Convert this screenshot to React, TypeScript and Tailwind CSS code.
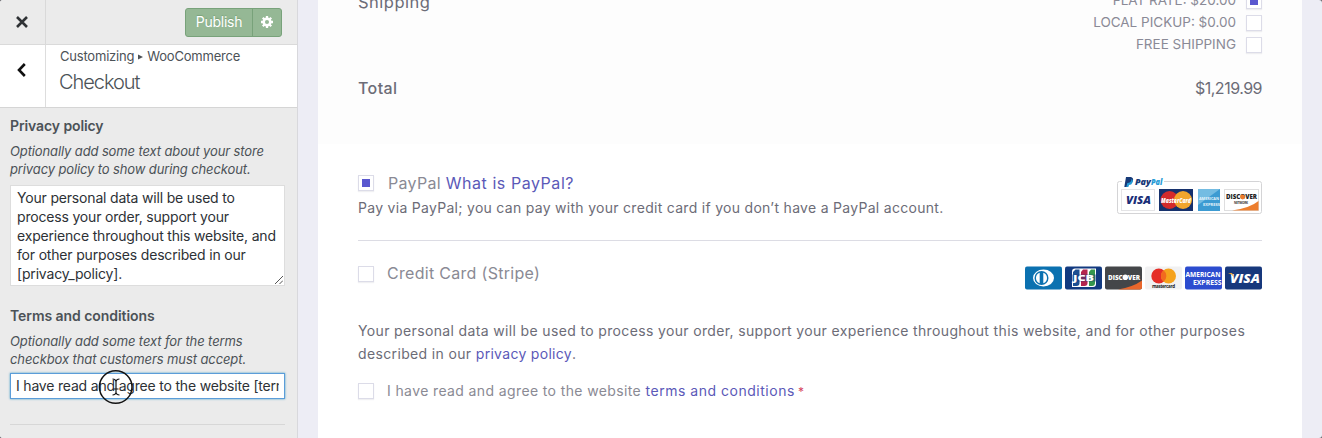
import React from "react";

function Box({ checked = false }: { checked?: boolean }) {
  return (
    <span className="flex size-4 shrink-0 items-center justify-center border border-[#dcdce8] bg-white shadow-[0_1px_1px_rgba(60,60,90,0.08)]">
      {checked && <span className="size-2 bg-[#5a58cf]" />}
    </span>
  );
}

function CardTile({ bg, children }: { bg: string; children: React.ReactNode }) {
  return (
    <svg width="37" height="24" viewBox="0 0 37 24">
      <rect y="0.5" width="37" height="23" rx="2" fill={bg} />
      {children}
    </svg>
  );
}

function StripeCards() {
  return (
    <div className="flex gap-[3px] font-['Open_Sans',sans-serif]">
      <CardTile bg="#0b71b0">
        <ellipse cx="18.5" cy="12" rx="10.5" ry="8.5" fill="#fff" />
        <circle cx="16.5" cy="12" r="7" fill="#0b71b0" />
        <path d="M14.7 6.8a5.5 5.5 0 0 0 0 10.4zM18.3 6.8a5.5 5.5 0 0 1 0 10.4z" fill="#fff" />
      </CardTile>
      <CardTile bg="#123a80">
        <path d="M10 2.5h21V18a3 3 0 0 1-3 3H7V5.5a3 3 0 0 1 3-3z" fill="#fff" />
        <path d="M10.5 3.5h4V17a3 3 0 0 1-3 3H8V6z" fill="#1c4f93" />
        <path d="M18 3.5h4.5V17a3 3 0 0 1-3 3H16V6z" fill="#b4254e" />
        <path d="M26 3.5h4V17a3 3 0 0 1-3 3h-3V6z" fill="#35974c" />
        <rect x="7" y="8.5" width="24" height="7" fill="#123a80" opacity="0.45" />
        <text x="8" y="15.2" fontSize="9" fontWeight="800" fill="#fff" textLength="21" lengthAdjust="spacingAndGlyphs">JCB</text>
      </CardTile>
      <CardTile bg="#444649">
        <path d="M13 23.5Q28 21 37 14.5v7a2 2 0 0 1-2 2z" fill="#e9662b" />
        <text x="3" y="13.5" fontSize="6.5" fontWeight="800" fill="#fff" textLength="32" lengthAdjust="spacingAndGlyphs">DISCOVER</text>
        <circle cx="20.3" cy="11.2" r="2.6" fill="#fff" />
      </CardTile>
      <CardTile bg="#f1f1f2">
        <circle cx="13.8" cy="10" r="7.5" fill="#e52d27" />
        <circle cx="23.5" cy="10" r="7.5" fill="#f5a21c" />
        <path d="M18.6 4.2a7.5 7.5 0 0 1 0 11.6a7.5 7.5 0 0 1 0-11.6z" fill="#f26a1f" />
        <text x="7" y="21.7" fontSize="4.5" fontWeight="700" fill="#222" textLength="23">mastercard</text>
      </CardTile>
      <CardTile bg="#2c4ccf">
        <text x="0.5" y="10.5" fontSize="7.5" fontWeight="700" fill="#fff" textLength="35" lengthAdjust="spacingAndGlyphs">AMERICAN</text>
        <text x="8" y="18.5" fontSize="7.5" fontWeight="700" fill="#fff" textLength="28.5" lengthAdjust="spacingAndGlyphs">EXPRESS</text>
      </CardTile>
      <CardTile bg="#17387c">
        <text x="5" y="17" fontSize="13" fontWeight="800" fontStyle="italic" fill="#fff" textLength="30" lengthAdjust="spacingAndGlyphs">VISA</text>
        <path d="M3 7h4l2 4q-2-3-6-4z" fill="#e9a33a" />
      </CardTile>
    </div>
  );
}

function PayPalCards() {
  return (
    <svg width="146" height="38" viewBox="0 0 146 38" className="font-['Open_Sans',sans-serif]">
      <rect x="1.5" y="5.5" width="144" height="32" rx="2" fill="#fff" stroke="#d4d4d6" />
      <rect x="6" y="0" width="42" height="12" fill="#fff" />
      <path d="M10 1h5q3 1 1.8 4T12.5 8l-.6 3H8.3z" fill="#173a78" />
      <path d="M15.5 3q2 1 1 3.5T13 9l-.7 2h-2l1-4q4 0 4.2-4z" fill="#239bd7" />
      <text x="19" y="9" fontSize="9" fontWeight="800" fontStyle="italic" fill="#193a78" textLength="16" lengthAdjust="spacingAndGlyphs">Pay</text>
      <text x="35" y="9" fontSize="9" fontWeight="800" fontStyle="italic" fill="#269bd6" textLength="11.5" lengthAdjust="spacingAndGlyphs">Pal</text>
      <rect x="5.5" y="13.5" width="33" height="21" fill="#fff" stroke="#e4e4e6" />
      <text x="10" y="28" fontSize="11" fontWeight="800" fontStyle="italic" fill="#1a2f78" textLength="25" lengthAdjust="spacingAndGlyphs">VISA</text>
      <rect x="43" y="13" width="34" height="22" fill="#16316d" />
      <circle cx="53.5" cy="24" r="9" fill="#d42a2b" />
      <circle cx="67" cy="24" r="9" fill="#f2a52d" />
      <text x="45" y="27" fontSize="7.5" fontWeight="800" fontStyle="italic" fill="#fff" textLength="30" lengthAdjust="spacingAndGlyphs">MasterCard</text>
      <rect x="82" y="13" width="22" height="22" fill="#3c9bd2" />
      <path d="M82 13h22L82 29z" fill="#74bce2" />
      <text x="83" y="23.5" fontSize="4" fontWeight="700" fill="#e5f4fb" textLength="20" lengthAdjust="spacingAndGlyphs">AMERICAN</text>
      <text x="87" y="29.5" fontSize="4" fontWeight="700" fill="#e5f4fb" textLength="17" lengthAdjust="spacingAndGlyphs">EXPRESS</text>
      <rect x="108.5" y="13.5" width="34" height="21" fill="#fff" stroke="#dededf" />
      <path d="M116 34.5Q134 32 142.5 25v9.5z" fill="#ed7e2e" />
      <text x="110" y="23" fontSize="6" fontWeight="800" fill="#222" textLength="31" lengthAdjust="spacingAndGlyphs">DISCOVER</text>
      <circle cx="126.7" cy="21" r="2.4" fill="#ee7b2b" />
      <text x="118" y="27.5" fontSize="3" fontWeight="700" fill="#333" textLength="14">NETWORK</text>
    </svg>
  );
}

function Sidebar() {
  return (
    <aside className="relative h-[438px] w-[298px] shrink-0 border-r border-[#d8d8dc] bg-[#ebebeb] text-[14px] text-[#4c5257]">
      <div className="flex h-[45px] border-b border-[#dadada]">
        <div className="flex w-[46px] items-center justify-center border-r border-[#d9d9d9] pr-0.5">
          <svg width="12" height="12" viewBox="0 0 12 12" stroke="#2f3235" strokeWidth="2.6">
            <path d="M1 1l10 10M11 1L1 11" />
          </svg>
        </div>
        <div className="flex flex-1 justify-end pt-2 pr-[15px]">
          <div className="flex h-[29px] w-[97px] rounded-[3px] border border-[#78a27a] bg-[#95b895] text-white">
            <div className="flex w-[67px] items-center justify-center border-r border-[#78a27a] pb-[2px] text-[14px] tracking-[-0.25px] [text-shadow:0_-1px_1px_#78a27a]">Publish</div>
            <div className="flex flex-1 items-center justify-center pr-px pb-px">
              <svg width="14" height="14" viewBox="-7 -7 14 14">
                <circle r="3.3" fill="none" stroke="#fff" strokeWidth="2.5" />
                <path d="M0-6v2.5M0 6V3.5M-6 0h2.5M6 0H3.5M-4.2-4.2l1.7 1.7M4.2 4.2L2.5 2.5M-4.2 4.2l1.7-1.7M4.2-4.2L2.5-2.5" stroke="#fff" strokeWidth="2.3" />
              </svg>
            </div>
          </div>
        </div>
      </div>
      <div className="flex h-[63px] border-b border-[#d5d5d5] bg-white">
        <div className="flex w-[46px] justify-center border-r border-[#ddd] pt-[18px] pr-[3px]">
          <svg width="9" height="14" viewBox="0 0 9 14" fill="none" stroke="#111" strokeWidth="2.6">
            <path d="M7.8 1L2 7l5.8 6" />
          </svg>
        </div>
        <div className="pl-[14px]">
          <div className="flex h-[22px] items-center gap-1 pt-0.5 text-[13px] tracking-[-0.2px]">
            <span>Customizing</span>
            <svg width="5" height="6" viewBox="0 0 5 6"><path d="M0 .5l5 2.5-5 2.5z" fill="#4c5257" /></svg>
            <span>WooCommerce</span>
          </div>
          <div className="-ml-px h-[30px] text-[20px] leading-[30px] font-light tracking-[-1.05px]">Checkout</div>
        </div>
      </div>
      <div className="px-[10px] pr-3 whitespace-nowrap">
        <h2 className="mt-2 h-5 text-[14px] leading-5 font-semibold tracking-[-0.1px]">Privacy policy</h2>
        <p className="mt-[6px] text-[13px] leading-[18px] tracking-[-0.12px] italic">Optionally add some text about your store<br />privacy policy to show during checkout.</p>
        <div className="relative mt-[7px] h-[101px] border border-[#ddd] bg-white pt-[2px] pl-[6px] text-[14px] leading-[19px] tracking-[-0.18px] text-[#2d3136]">
          Your personal data will be used to<br />process your order, support your<br />experience throughout this website, and<br />for other purposes described in our<br />[privacy_policy].
          <svg className="absolute right-px bottom-px" width="8" height="8" stroke="#555"><path d="M0 8L8 0M4.5 8L8 4.5" /></svg>
        </div>
        <h2 className="mt-5 h-5 text-[14px] leading-5 font-semibold tracking-[-0.06px]">Terms and conditions</h2>
        <p className="mt-[6px] text-[13px] leading-[18px] tracking-[-0.1px] italic">Optionally add some text for the terms<br />checkbox that customers must accept.</p>
        <div className="relative mt-[5px] h-[26px] border border-[#5b9dd9] bg-white px-[5px] text-[14px] leading-6 tracking-[-0.19px] text-[#2d3136] shadow-[0_0_2px_rgba(30,140,190,0.8)]">
          <div className="overflow-hidden">I have read and agree to the website [terms]</div>
          <svg className="absolute top-[-5px] left-[87px]" width="36" height="36" viewBox="0 0 36 36" fill="none" stroke="#141414">
            <circle cx="17.7" cy="18" r="16.3" strokeWidth="1.5" />
            <path d="M14.5 10q3 0 3.5 2.5Q18.5 10 21.5 10M18 12v12M14.5 26q3 0 3.5-2.5Q18.5 26 21.5 26M15.5 20h5" strokeWidth="1.2" />
          </svg>
        </div>
        <div className="mt-[25px] border-t border-[#d7d7d7]" />
      </div>
    </aside>
  );
}

function Shipping({ label, checked = false }: { label: string; checked?: boolean }) {
  return (
    <div className="flex h-[22px] items-center justify-end gap-[10px] text-[13.5px] text-[#8a8a96]">
      <span className="-mt-0.5">{label}</span>
      <Box checked={checked} />
    </div>
  );
}

export default function App() {
  return (
    <div className="h-[438px] w-[1322px] bg-[#66666b]">
      <div className="flex h-[438px] w-[1322px] overflow-hidden rounded-[3px] bg-[#ededf5] font-[Inter,sans-serif]">
        <Sidebar />
        <main className="ml-5 h-[438px] w-[984px] bg-white whitespace-nowrap text-[#6c6c77]">
          <section className="h-[144px] overflow-hidden bg-[#fdfdfd] px-10">
            <div className="flex h-[56px] justify-between">
              <div className="-mt-[10px] h-6 text-[16.5px] leading-6 tracking-[0.5px]">Shipping</div>
              <div className="-mt-[10px]">
                <Shipping label="FLAT RATE: $20.00" checked />
                <Shipping label="LOCAL PICKUP: $0.00" />
                <Shipping label="FREE SHIPPING" />
              </div>
            </div>
            <div className="mt-5 flex h-6 items-center justify-between">
              <span className="text-[16px] font-medium tracking-[0.4px]">Total</span>
              <span className="text-[16px] tracking-[-0.5px]">$1,219.99</span>
            </div>
          </section>
          <section className="px-10">
            <div className="flex h-[97px] justify-between border-b border-[#dcdce4] pt-[27px]">
              <div>
                <div className="flex h-6 items-center gap-[14px] text-[16px] text-[#8a8a94]">
                  <Box checked />
                  <span className="tracking-[0.3px]">PayPal <span className="tracking-[0.55px] text-[#5b59b8]">What is PayPal?</span></span>
                </div>
                <div className="mt-px h-6 text-[14px] leading-6 tracking-[0.29px]">Pay via PayPal; you can pay with your credit card if you don’t have a PayPal account.</div>
              </div>
              <div className="mt-[5px]"><PayPalCards /></div>
            </div>
            <div className="mt-[21px] flex h-[24px] items-center justify-between">
              <div className="flex items-center gap-[13px] text-[16px] text-[#8a8a94]">
                <Box />
                <span className="-mt-0.5 tracking-[0.3px]">Credit Card (Stripe)</span>
              </div>
              <div className="mt-[7px]"><StripeCards /></div>
            </div>
            <p className="mt-[33px] text-[14px] leading-[23px] tracking-[0.355px]">Your personal data will be used to process your order, support your experience throughout this website, and for other purposes<br />described in our <span className="tracking-[0.3px] text-[#5b59b8]">privacy policy</span>.</p>
            <div className="mt-[14px] flex h-6 items-center gap-[13px] text-[14px] text-[#8a8a94]">
              <Box />
              <span className="-mt-px tracking-[0.38px]">I have read and agree to the website <span className="tracking-[0.52px] text-[#5b59b8]">terms and conditions</span><span className="ml-[3px] text-[12px] text-[#d64560]">*</span></span>
            </div>
          </section>
        </main>
      </div>
    </div>
  );
}
